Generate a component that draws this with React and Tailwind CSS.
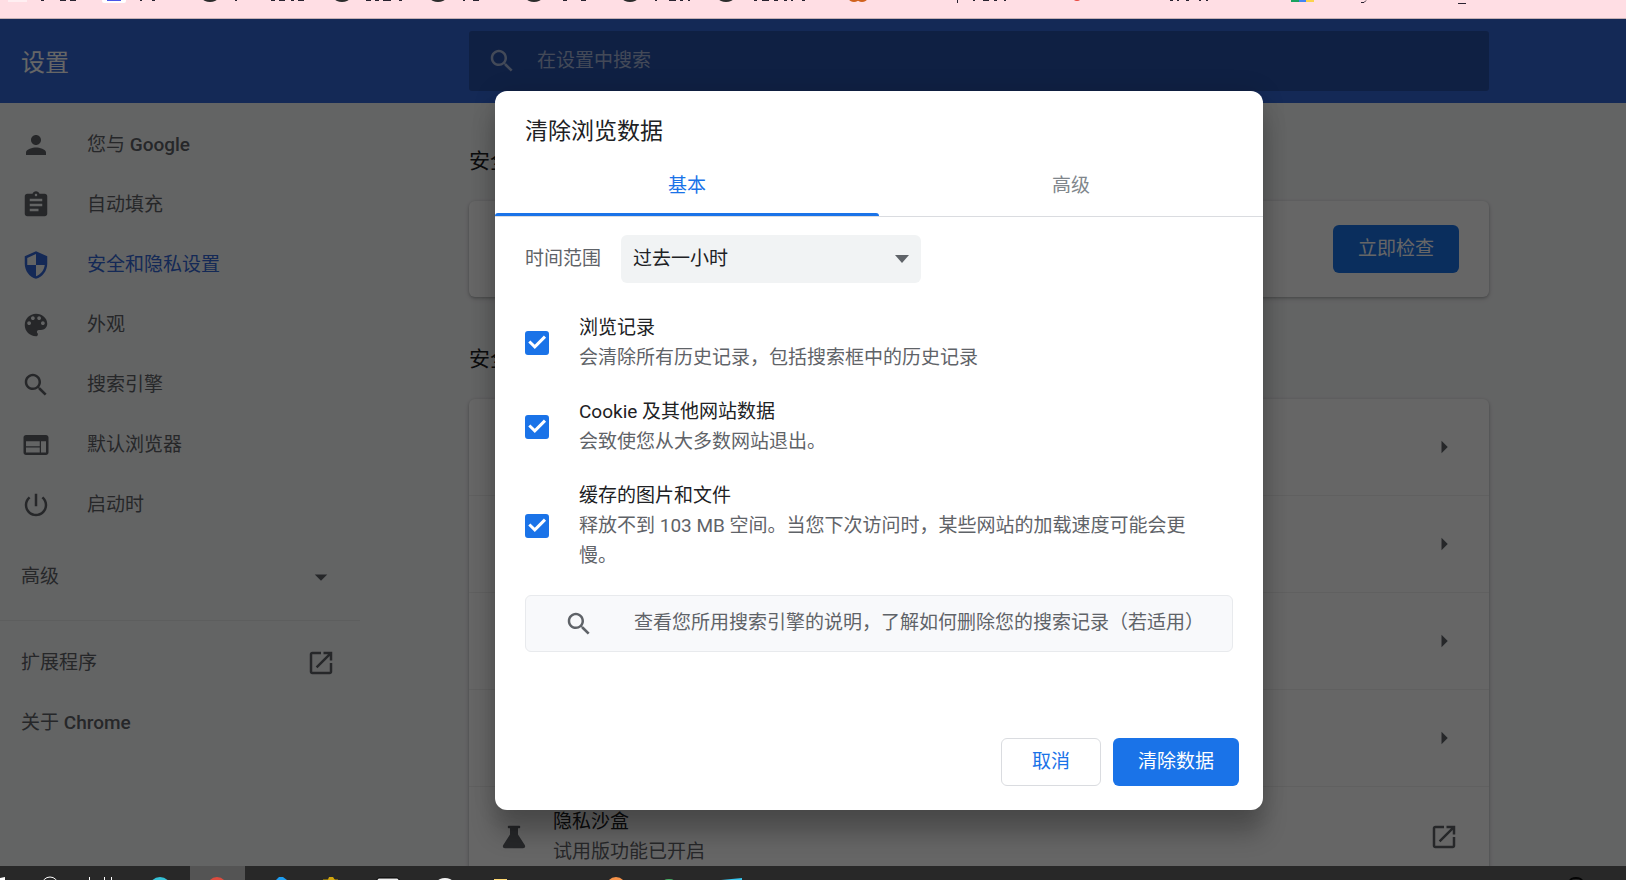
import React, { useState } from 'react';

const menuItems = [
  {
    label: '您与',
    brand: 'Google',
    path: 'M12 12c2.21 0 4-1.79 4-4s-1.79-4-4-4-4 1.79-4 4 1.79 4 4 4zm0 2c-2.67 0-8 1.34-8 4v2h16v-2c0-2.66-5.33-4-8-4z',
  },
  {
    label: '自动填充',
    path: 'M19 3h-4.18C14.4 1.84 13.3 1 12 1c-1.3 0-2.4.84-2.82 2H5c-1.1 0-2 .9-2 2v14c0 1.1.9 2 2 2h14c1.1 0 2-.9 2-2V5c0-1.1-.9-2-2-2zm-7 0c.55 0 1 .45 1 1s-.45 1-1 1-1-.45-1-1 .45-1 1-1zm2 14H7v-2h7v2zm3-4H7v-2h10v2zm0-4H7V7h10v2z',
  },
  {
    label: '安全和隐私设置',
    active: true,
    path: 'M12 1L3 5v6c0 5.55 3.84 10.74 9 12 5.16-1.26 9-6.45 9-12V5l-9-4zm0 10.99h7c-.53 4.12-3.28 7.79-7 8.94V12H5V6.3l7-3.11v8.8z',
  },
  {
    label: '外观',
    path: 'M12 3c-4.97 0-9 4.03-9 9s4.03 9 9 9c.83 0 1.5-.67 1.5-1.5 0-.39-.15-.74-.39-1.01-.23-.26-.38-.61-.38-.99 0-.83.67-1.5 1.5-1.5H16c2.76 0 5-2.24 5-5 0-4.42-4.03-8-9-8zm-5.5 9c-.83 0-1.5-.67-1.5-1.5S5.67 9 6.5 9 8 9.67 8 10.5 7.33 12 6.5 12zm3-4C8.67 8 8 7.33 8 6.5S8.67 5 9.5 5s1.5.67 1.5 1.5S10.33 8 9.5 8zm5 0c-.83 0-1.5-.67-1.5-1.5S13.67 5 14.5 5s1.5.67 1.5 1.5S15.33 8 14.5 8zm3 4c-.83 0-1.5-.67-1.5-1.5S16.67 9 17.5 9s1.5.67 1.5 1.5-.67 1.5-1.5 1.5z',
  },
  {
    label: '搜索引擎',
    path: 'M15.5 14h-.79l-.28-.27C15.41 12.59 16 11.11 16 9.5 16 5.91 13.09 3 9.5 3S3 5.91 3 9.5 5.91 16 9.5 16c1.61 0 3.09-.59 4.23-1.57l.27.28v.79l5 4.99L20.49 19l-4.99-5zm-6 0C7.01 14 5 11.99 5 9.5S7.01 5 9.5 5 14 7.01 14 9.5 11.99 14 9.5 14z',
  },
  {
    label: '默认浏览器',
    path: 'M20 4H4c-1.1 0-1.99.9-1.99 2L2 18c0 1.1.9 2 2 2h16c1.1 0 2-.9 2-2V6c0-1.1-.9-2-2-2zm-5 14H4v-4h11v4zm0-5H4V9h11v4zm5 5h-4V9h4v9z',
  },
  {
    label: '启动时',
    path: 'M13 3h-2v10h2V3zm4.83 2.17l-1.42 1.42C17.99 7.86 19 9.81 19 12c0 3.87-3.13 7-7 7s-7-3.13-7-7c0-2.19 1.01-4.14 2.58-5.42L6.17 5.17C4.23 6.82 3 9.26 3 12c0 4.97 4.03 9 9 9s9-4.03 9-9c0-2.74-1.23-5.18-3.17-6.83z',
  },
];

const searchPath = menuItems[4].path;
const openPath =
  'M19 19H5V5h7V3H5c-1.11 0-2 .9-2 2v14c0 1.1.89 2 2 2h14c1.1 0 2-.9 2-2v-7h-2v7zM14 3v2h3.59l-9.83 9.83 1.41 1.41L19 6.41V10h2V3h-7z';

const clearOptions = [
  {
    id: 'history',
    title: '浏览记录',
    detail: '会清除所有历史记录，包括搜索框中的历史记录',
  },
  {
    id: 'cookies',
    title: 'Cookie 及其他网站数据',
    detail: '会致使您从大多数网站退出。',
  },
  {
    id: 'cache',
    title: '缓存的图片和文件',
    detail: '释放不到 103 MB 空间。当您下次访问时，某些网站的加载速度可能会更慢。',
  },
];

const Icon = ({ path, className = '' }) => (
  <svg
    viewBox="0 0 24 24"
    fill="currentColor"
    aria-hidden="true"
    className={`h-[30px] w-[30px] shrink-0 ${className}`}
  >
    <path d={path} />
  </svg>
);

const BookmarksBar = () => (
  <div className="h-[19px] shrink-0 overflow-hidden border-b border-[#c5b0b4] bg-[#ffdee4]">
    <svg width="1500" height="18" aria-hidden="true">
      <rect x="8" y="-2" width="19" height="4" fill="#fff" opacity="0.5" />
      <rect x="102" y="-4" width="24" height="7" rx="2" fill="#fff" />
      <rect x="107" y="-4" width="14" height="5" fill="#4a55e8" />
      <g fill="#2b2b2b">
        <ellipse cx="210" cy="-1" rx="7" ry="3" />
        <ellipse cx="342" cy="-1" rx="7" ry="3" />
        <ellipse cx="438" cy="-1" rx="7" ry="3" />
        <ellipse cx="534" cy="-1" rx="7" ry="3" />
        <ellipse cx="630" cy="-1" rx="7" ry="3" />
        <ellipse cx="726" cy="-1" rx="7" ry="3" />
      </g>
      <g fill="none" stroke="#2a2230">
        <path d="M41 .5h3M60 .5h6M70 .5h6M140 .5h2M152 .5h3M235 .5h2M271 .5h4M279 .5h6M291 .5h3M298 .5h6" />
        <path d="M366 .5h5M375 .5h4M383 .5h8M399 .5h3M463 .5h2M473 .5h6M563 .5h4M581 .5h5M655 .5h2M669 .5h7M680 .5h3M688 .5h2" />
        <path d="M754 .5h3M762 .5h7M774 .5h4M784 .5h3M791 .5h2M802 .5h3M973 .5h2M983 .5h6M994 .5h3M1004 .5h2" />
        <path d="M1170 .5h3M1177 .5h2M1186 .5h3M1199 .5h2M1206 .5h2M1361 2.5h3l2-2M1458 3.5h8M957.500 0v3" />
      </g>
      <ellipse cx="854" cy="-1" rx="5" ry="3" fill="#d0621d" />
      <ellipse cx="862" cy="-1" rx="5" ry="3" fill="#d0621d" />
      <circle cx="1077" cy="-3" r="4" fill="#e8453c" />
      <rect x="1291" y="-3" width="8" height="5" fill="#1aa260" />
      <rect x="1299" y="-3" width="7" height="5" fill="#4285f4" />
      <rect x="1306" y="-3" width="8" height="5" fill="#fbd34c" />
    </svg>
  </div>
);

const Taskbar = () => (
  <div className="h-[14px] shrink-0 overflow-hidden bg-[#282828]">
    <svg width="1626" height="14" aria-hidden="true">
      <rect x="190" width="55" height="14" fill="#545454" />
      <path d="M0 12l5-1v3H0z" fill="#fff" />
      <circle cx="50" cy="19" r="8" fill="none" stroke="#fff" strokeWidth="1" />
      <path d="M89.500 11v3M104.500 11v3M111.500 11v3" stroke="#fff" />
      <circle cx="160" cy="22" r="11" fill="#35c1d6" />
      <circle cx="217" cy="21" r="10" fill="#dc4b3e" />
      <path d="M276 14l3-3h4l4 3z" fill="#1e9df1" />
      <path d="M323 14v-1h5l1-1h4l1 1h4v1z" fill="#7f6a10" />
      <path d="M328 14l1-3h4l2 3z" fill="#d1a50e" />
      <rect x="377" y="12" width="22" height="4" rx="2" fill="#eee" stroke="#000" />
      <ellipse cx="445" cy="15" rx="7" ry="3" fill="#f3f3f3" />
      <rect x="494" y="13" width="13" height="2" fill="#ffd973" />
      <circle cx="616" cy="21" r="10" fill="#f7934a" />
      <ellipse cx="669" cy="15" rx="5" ry="2" fill="#48b368" />
      <path d="M721 14l21-2v2z" fill="#38c5ee" />
      <ellipse cx="1576" cy="15" rx="6" ry="3" fill="none" stroke="#050505" strokeWidth="2" />
    </svg>
  </div>
);

const Sidebar = () => (
  <nav className="w-[360px] shrink-0 pt-3 text-[#5f6368]">
    {menuItems.map((item) => (
      <a
        key={item.label}
        href="#"
        className={`flex h-[60px] items-center gap-9 pl-[21px] ${
          item.active ? 'text-[#3367d6]' : ''
        }`}
      >
        <Icon path={item.path} />
        <span>
          {item.label}
          {item.brand && <span className="font-medium"> {item.brand}</span>}
        </span>
      </a>
    ))}
    <button className="mt-3 flex h-[60px] w-full items-center justify-between pl-[21px] pr-6">
      高级
      <Icon path="M7 10l5 5 5-5z" />
    </button>
    <div className="mb-3 mt-[13px] border-b border-black/6" />
    <a href="#" className="flex h-[60px] items-center justify-between pl-[21px] pr-6">
      扩展程序
      <Icon path={openPath} />
    </a>
    <a href="#" className="flex h-[60px] items-center pl-[21px]">
      <span>
        关于<span className="font-medium"> Chrome</span>
      </span>
    </a>
  </nav>
);

const cardClass =
  'rounded-md bg-white shadow-[0_1px_3px_rgba(60,64,67,0.3),0_2px_5px_rgba(60,64,67,0.15)]';

const SettingsPage = () => (
  <main className="ml-[109px] mr-[137px] max-w-[1020px] flex-1 text-[#202124]">
    <h2 className="pt-[42px] text-[21px] leading-8">安全</h2>
    <section className={`mt-6 flex h-24 items-center justify-end px-[30px] ${cardClass}`}>
      <button className="h-12 w-[126px] rounded-md bg-[#1a73e8] text-white">立即检查</button>
    </section>
    <h2 className="pt-[46px] text-[21px] leading-8">安全</h2>
    <section className={`mt-6 divide-y divide-black/6 ${cardClass}`}>
      {[0, 1, 2, 3].map((row) => (
        <div key={row} className="flex h-[97px] items-center justify-end px-[30px] text-[#5f6368]">
          <Icon path="M10 7l5 5-5 5z" />
        </div>
      ))}
      <a href="#" className="flex h-[100px] items-center px-[30px] text-[#5f6368]">
        <Icon path="M8 3h8c.6 0 1 .4 1 1s-.4 1-1 1h-.8v5l5.400 8.300c.8 1.300.1 2.700-1.400 2.700H4.800c-1.500 0-2.200-1.400-1.400-2.700L8.800 10V5H8c-.6 0-1-.4-1-1s.4-1 1-1z" />
        <span className="ml-6 flex-1 leading-[30px]">
          <span className="block text-[#202124]">隐私沙盒</span>
          <span className="block">试用版功能已开启</span>
        </span>
        <Icon path={openPath} />
      </a>
    </section>
  </main>
);

const ClearDataDialog = () => {
  const [activeTab, setActiveTab] = useState('基本');
  const [checked, setChecked] = useState({ history: true, cookies: true, cache: true });

  const toggle = (id) => setChecked({ ...checked, [id]: !checked[id] });

  return (
    <div
      role="dialog"
      aria-labelledby="dialog-title"
      className="w-full max-w-[768px] rounded-xl bg-white text-[#202124] shadow-[0_0_24px_rgba(0,0,0,0.12),0_24px_24px_rgba(0,0,0,0.24)]"
    >
      <h1 id="dialog-title" className="px-[30px] pb-2 pt-[25px] text-[23px] leading-8">
        清除浏览数据
      </h1>

      {/* Tabs */}
      <div className="flex border-b border-[#dadce0]">
        {['基本', '高级'].map((tab) => (
          <button
            key={tab}
            onClick={() => setActiveTab(tab)}
            className={`relative h-[60px] flex-1 ${
              activeTab === tab ? 'text-[#1a73e8]' : 'text-[#80868b]'
            }`}
          >
            {tab}
            {activeTab === tab && (
              <span className="absolute inset-x-0 bottom-0 h-[3px] rounded-t bg-[#1a73e8]" />
            )}
          </button>
        ))}
      </div>

      <div className="px-[30px] pt-[18px]">
        <div className="flex items-center">
          <label htmlFor="time-range" className="w-24 text-[#5f6368]">
            时间范围
          </label>
          <div className="relative w-[300px]">
            <select
              id="time-range"
              className="h-12 w-full appearance-none rounded-md bg-[#f1f3f4] px-3"
            >
              <option>过去一小时</option>
            </select>
            <svg
              viewBox="0 0 14 8"
              fill="#5f6368"
              aria-hidden="true"
              className="pointer-events-none absolute right-3 top-5 h-2 w-[14px]"
            >
              <path d="M0 0h14L7 8z" />
            </svg>
          </div>
        </div>

        {/* Data types */}
        <div className="mt-[30px] flex flex-col gap-6">
          {clearOptions.map((option) => (
            <label key={option.id} className="flex items-center gap-[30px] leading-[30px]">
              <span className="relative h-6 w-6 shrink-0">
                <input
                  type="checkbox"
                  checked={checked[option.id]}
                  onChange={() => toggle(option.id)}
                  className="block h-6 w-6 appearance-none rounded-[3px] border-2 border-[#5f6368] checked:border-[#1a73e8] checked:bg-[#1a73e8]"
                />
                {checked[option.id] && (
                  <svg
                    viewBox="0 0 24 24"
                    fill="none"
                    stroke="#fff"
                    strokeWidth="3"
                    className="pointer-events-none absolute inset-0"
                  >
                    <path d="M4.300 10.500l5.500 5.300L20 5.600" />
                  </svg>
                )}
              </span>
              <span className="flex-1 pr-6">
                <span className="block">{option.title}</span>
                <span className="block text-[#5f6368]">{option.detail}</span>
              </span>
            </label>
          ))}
        </div>

        <a
          href="#"
          className="mt-6 flex h-[57px] items-center gap-10 rounded-md border border-[#e8eaed] bg-[#f8f9fb] pl-[38px] text-[#5f6368]"
        >
          <Icon path={searchPath} />
          <span className="whitespace-nowrap">
            查看您所用搜索引擎的说明，了解如何删除您的搜索记录（若适用）
          </span>
        </a>
      </div>

      <div className="mt-[86px] flex justify-end gap-3 px-6 pb-6">
        <button className="h-12 w-[100px] rounded-md border border-[#dadce0] text-[#1a73e8]">
          取消
        </button>
        <button className="h-12 w-[126px] rounded-md bg-[#1a73e8] text-white">清除数据</button>
      </div>
    </div>
  );
};

const App = () => (
  <div className="flex h-screen flex-col overflow-hidden font-['Roboto','Noto_Sans_CJK_SC',sans-serif] text-[19px]">
    <BookmarksBar />
    <div className="relative min-h-0 flex-1 overflow-hidden bg-[#f8f9fa]">
      <header className="flex h-[84px] items-center bg-[#3367d6] text-white">
        <h1 className="w-[360px] shrink-0 pl-[21px] pt-1 text-2xl">设置</h1>
        <label className="ml-[109px] mr-[137px] flex h-[60px] max-w-[1020px] flex-1 items-center gap-5 rounded-[3px] bg-black/22 pl-[18px] text-white/60">
          <Icon path={searchPath} />
          <input
            type="text"
            aria-label="在设置中搜索"
            placeholder="在设置中搜索"
            className="flex-1 bg-transparent outline-none placeholder:text-white/60"
          />
        </label>
      </header>
      <div className="flex">
        <Sidebar />
        <SettingsPage />
      </div>
      <div className="absolute inset-0 flex items-start justify-center bg-black/60 pl-[132px] pt-[72px]">
        <ClearDataDialog />
      </div>
    </div>
    <Taskbar />
  </div>
);

export default App;
